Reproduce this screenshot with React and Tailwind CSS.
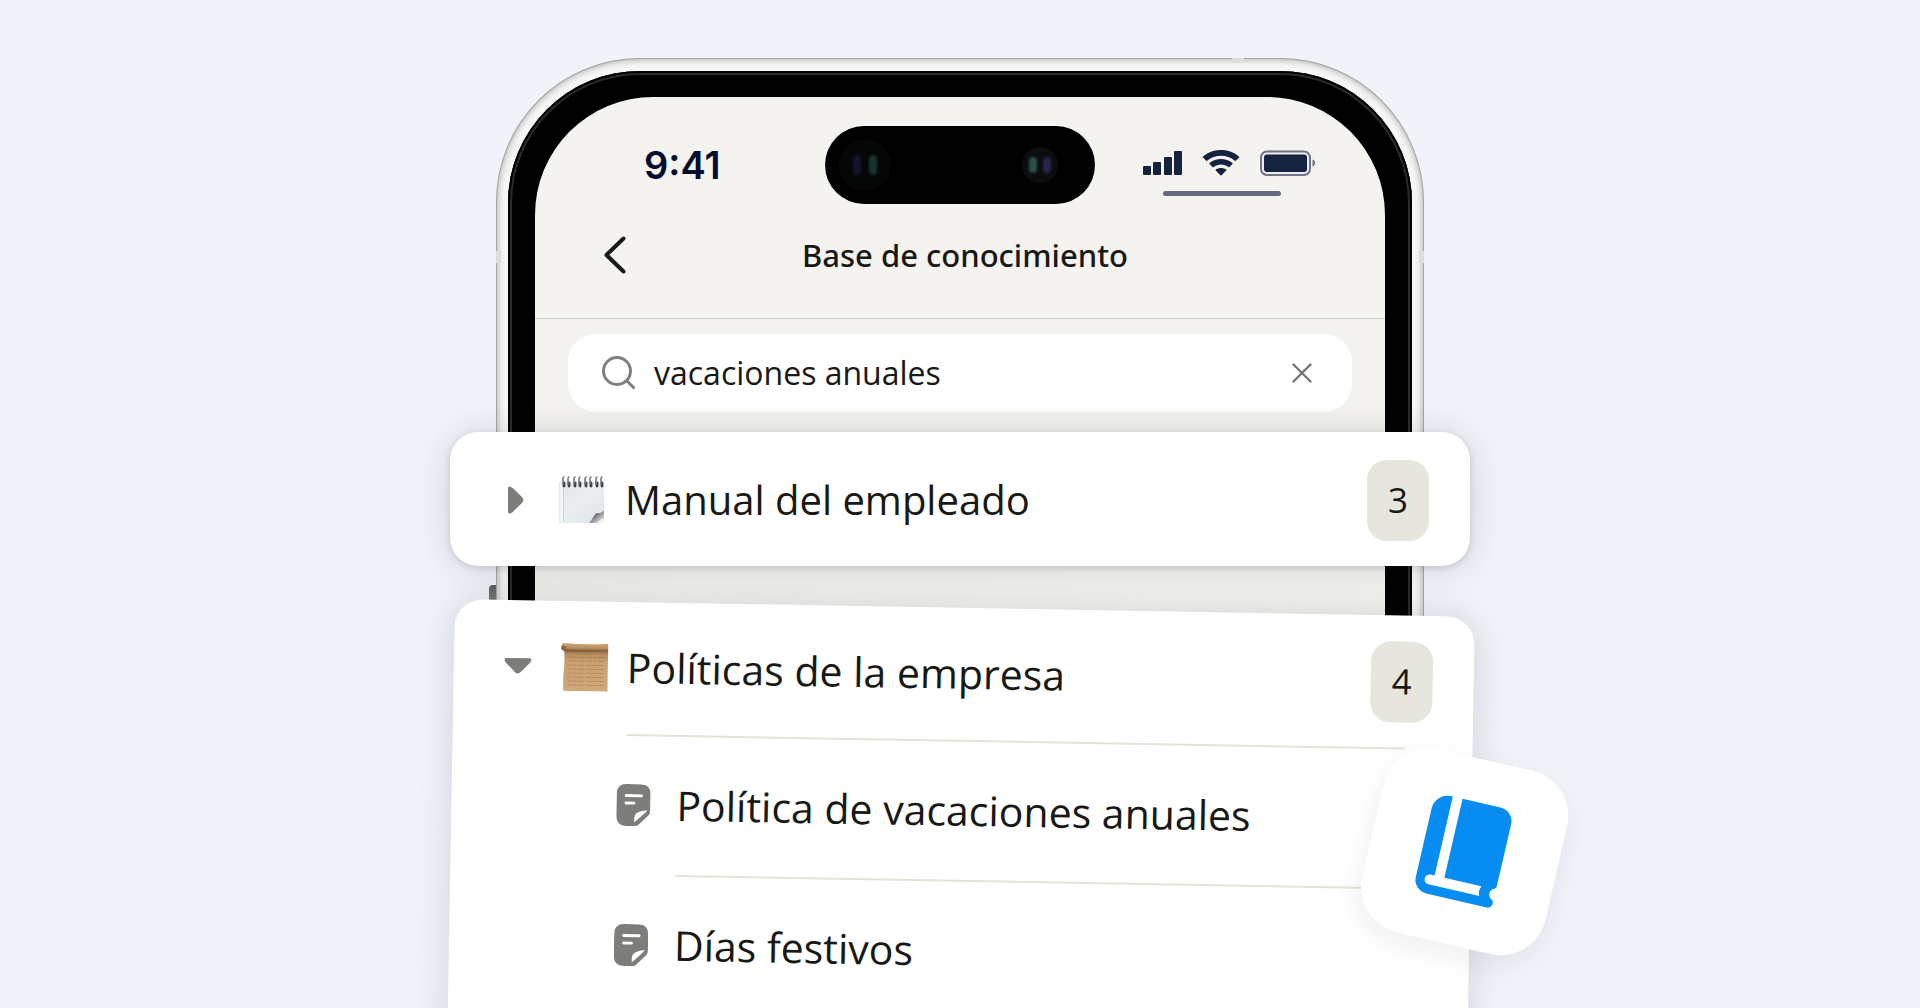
const folders = [
  { title: "Manual del empleado", count: 3 },
  {
    title: "Políticas de la empresa",
    count: 4,
    pages: ["Política de vacaciones anuales", "Días festivos"],
  },
];

const SignalIcon = () => (
  <svg width="39" height="26" viewBox="0 0 39 26" fill="#15233f">
    <rect x="0" y="16" width="8" height="9" rx="1" />
    <rect x="10" y="12" width="8" height="13" rx="1" />
    <rect x="21" y="7" width="8" height="18" rx="1" />
    <rect x="31" y="1" width="8" height="24" rx="1" />
  </svg>
);

const WifiIcon = () => (
  <svg width="38" height="26" viewBox="0 0 38 26" fill="#15233f">
    <path d="M1 7.5Q0.5 7 1 6.5C11-2.2 27-2.2 37 6.5Q37.5 7 37 7.5L34 10.6Q33.4 11.2 32.8 10.7C25 4 13 4 5.2 10.7Q4.6 11.2 4 10.6Z" />
    <path d="M7.5 14Q7 13.5 7.5 13C14 7.5 24 7.5 30.5 13Q31 13.5 30.5 14L27.5 17Q27 17.5 26.4 17C22 13.5 16 13.5 11.6 17Q11 17.5 10.5 17Z" />
    <path d="M13.8 20.5Q13.3 20 13.8 19.6C17 17.6 21 17.6 24.2 19.6Q24.7 20 24.2 20.5L19.6 25.2Q19 25.8 18.4 25.2Z" />
  </svg>
);

const BatteryIcon = () => (
  <svg width="56" height="26" viewBox="0 0 56 26">
    <rect x="1" y="1.5" width="49" height="23.5" rx="6" fill="#eceef3" stroke="#6e7284" strokeWidth="2" />
    <rect x="4" y="4.5" width="43" height="17.5" rx="3" fill="#15233f" />
    <path d="M52.5 9.5C56 10.5 56 15.5 52.5 16.5Z" fill="#6e7284" />
  </svg>
);

const ChevronIcon = () => (
  <svg width="22" height="38" viewBox="0 0 22 38" fill="none" stroke="#1b1a17" strokeWidth="4" strokeLinecap="round" strokeLinejoin="round">
    <path d="M19.5 2.5L2.5 19L19.5 35.5" />
  </svg>
);

const SearchIcon = () => (
  <svg width="34" height="34" viewBox="0 0 34 34" fill="none" stroke="#7f7f7c" strokeWidth="3">
    <circle cx="15" cy="15" r="13.5" />
    <path d="M24.5 24.5L32.5 32.5" />
  </svg>
);

const ClearIcon = () => (
  <svg width="20" height="20" viewBox="0 0 20 20" fill="none" stroke="#767673" strokeWidth="2.4" strokeLinecap="round">
    <path d="M1.5 1.5L18.5 18.5M18.5 1.5L1.5 18.5" />
  </svg>
);

const Caret = ({ open }) => (
  <svg width="28" height="28" viewBox="0 0 28 28" fill="#7d7d7a" className={open ? "rotate-90" : ""}>
    <path d="M6 2.5Q6 0 8.5 0.8Q10 1.3 11 2.3L20.2 11.3Q22.6 14 20.2 16.7L11 25.7Q10 26.7 8.5 27.2Q6 28 6 25.5Z" />
  </svg>
);

const NotepadIcon = () => (
  <svg width="46" height="48" viewBox="0 0 46 48">
    <defs>
      <linearGradient id="pad" x1="0" y1="0" x2="1" y2="1">
        <stop offset="0" stopColor="#e3e7ea" />
        <stop offset="0.5" stopColor="#e9eef1" />
        <stop offset="1" stopColor="#dfe3e8" />
      </linearGradient>
      <linearGradient id="curl" x1="0" y1="0" x2="1" y2="1">
        <stop offset="0.3" stopColor="#55565c" />
        <stop offset="0.6" stopColor="#a4a5ab" />
        <stop offset="0.9" stopColor="#e6e7ec" />
      </linearGradient>
    </defs>
    <rect x="0" y="6" width="45" height="41" fill="url(#pad)" />
    <path d="M2.5 7V46" stroke="#f7f9fa" strokeWidth="2" />
    <path d="M4.5 10V46" stroke="#ccd1d4" strokeWidth="1" />
    {[4, 9, 15, 20, 26, 31, 37, 42].map((x) => (
      <g key={x} fill="none" strokeLinecap="round">
        <path d={`M${x + 1} 10V7`} stroke="#3f4143" strokeWidth="2.8" />
        <path d={`M${x} 8V3Q${x} 1 ${x + 1} 1`} stroke="#77797c" strokeWidth="1.6" />
      </g>
    ))}
    <path d="M30 47C34 43 35 38 38 37C41 38 43 36 45 34.5V47Z" fill="url(#curl)" />
    <path d="M38 47C40 45 42 43 45 42V47Z" fill="#f3f4f6" />
  </svg>
);

const ScrollIcon = () => (
  <svg width="48" height="48" viewBox="0 0 48 48">
    <defs>
      <linearGradient id="paper" x1="0" y1="0" x2="0" y2="1">
        <stop offset="0" stopColor="#7d5d3b" />
        <stop offset="0.12" stopColor="#b68b5c" />
        <stop offset="0.3" stopColor="#c9a071" />
        <stop offset="1" stopColor="#cfa97c" />
      </linearGradient>
      <linearGradient id="roll" x1="0" y1="0" x2="0" y2="1">
        <stop offset="0" stopColor="#d3a877" />
        <stop offset="0.6" stopColor="#b88c5c" />
        <stop offset="1" stopColor="#6b4e32" />
      </linearGradient>
    </defs>
    <path d="M3 6H47V48H3Q2 40 3 28Q4 16 3 6Z" fill="url(#paper)" />
    <path d="M7 14H43M7 18H44M6 22H43M7 26H44M7 30H42M6 34H43M7 38H43M7 42H42" stroke="#9c7447" strokeWidth="1" strokeDasharray="5 1 3 1 7 2" opacity="0.45" />
    <path d="M3 0Q25 2 47 0V7Q25 9 4 8Q0 8 0 4.5Q0 0 3 0Z" fill="url(#roll)" />
    <circle cx="2.5" cy="5" r="2.5" fill="#8a6642" />
  </svg>
);

const PageIcon = () => (
  <svg width="34" height="42" viewBox="0 0 34 42">
    <path d="M10 0H24Q34 0 34 10V27Q34 29 32.5 30.5L23 40Q21 42 18.5 42H10Q0 42 0 32V10Q0 0 10 0Z" fill="#7d7d7a" />
    <path d="M9.5 11.5H25M9.5 19H17.5" stroke="#fff" strokeWidth="2.8" strokeLinecap="round" />
    <path d="M18 38Q17 29 23 27.5Q27 26 31 26Q28.5 29 25.5 31.5Q22 35 18 38Z" fill="#fff" />
  </svg>
);

const BookIcon = () => (
  <svg width="100" height="110" viewBox="-50 -55 100 110" fill="#078cf2">
    <path d="M-14 -51H25A14 14 0 0 1 39 -37V26A4 4 0 0 1 36 30C32.5 32 32.5 38 36 40A5 5 0 0 1 34 49.5H-28A14 14 0 0 1 -42 35.5V-35A16 16 0 0 1 -26 -51H-24V30H-28A5 5 0 0 0 -28 40H24C22.5 37 22.5 33 24 30H-14Z" />
  </svg>
);

const StatusBar = () => (
  <div className="grid grid-cols-[1fr_270px_1fr] items-start pt-[29px]">
    <div className="flex h-[78px] items-center pl-[109px] font-['Inter',sans-serif] text-[38px] font-semibold text-[#050d2e]">
      9:41
    </div>
    <div className="flex h-[78px] items-center justify-between rounded-full bg-black pr-[37px] pl-[14px]">
      <span className="flex size-[52px] items-center justify-center gap-2 rounded-full bg-[#050606]">
        <span className="h-5 w-2 rounded-full bg-[#10152e] blur-[1px]" />
        <span className="h-5 w-2 rounded-full bg-[#14332f] blur-[1px]" />
      </span>
      <span className="flex size-9 items-center justify-center gap-1.5 rounded-full bg-[#0b0d0e]">
        <span className="h-4 w-2 rounded-full bg-[#28514b] blur-[1px]" />
        <span className="h-4 w-2 rounded-full bg-[#25264f] blur-[1px]" />
      </span>
    </div>
    <div className="pt-6 pl-12">
      <div className="flex items-center gap-5">
        <SignalIcon />
        <WifiIcon />
        <BatteryIcon />
      </div>
      <div className="mt-[15px] ml-5 h-[5px] w-[118px] rounded-full bg-[#666b80]" />
    </div>
  </div>
);

const Phone = () => (
  <div className="relative mt-[58px] w-[928px] rounded-t-[144px] bg-[#f6f6f5] px-3 pt-[13px] shadow-[inset_0_0_0_1px_#a8a8a8,inset_0_0_6px_2px_#b3b3b3]">
    <span className="absolute top-[527px] -left-[7px] h-16 w-[7px] rounded-l-sm bg-linear-to-b from-[#5c605f] to-[#d5d6d6]" />
    <span className="absolute top-0 right-[180px] h-[5px] w-3 bg-[#dcdddd]" />
    <span className="absolute top-[193px] left-0 h-3 w-[5px] bg-[#dcdddd]" />
    <span className="absolute top-[193px] right-0 h-3 w-[5px] bg-[#dcdddd]" />
    <div className="h-full rounded-t-[132px] bg-black px-[27px] pt-[26px] shadow-[inset_0_0_0_2px_#000,inset_0_0_0_4px_#2b2b2b]">
      <div className="h-full rounded-t-[118px] bg-[#f4f3ef]">
        <StatusBar />
        <header className="flex h-[115px] items-center border-b border-[#cfcfcc] pr-[81px] pb-3 pl-[69px]">
          <button aria-label="Atrás">
            <ChevronIcon />
          </button>
          <h1 className="flex-1 text-center font-['Noto_Sans',sans-serif] text-[31px] font-medium">
            Base de conocimiento
          </h1>
        </header>
        <label className="mx-[33px] mt-[15px] flex h-[78px] items-center rounded-[28px] bg-white pr-10 pl-[34px]">
          <SearchIcon />
          <input
            type="text"
            defaultValue="vacaciones anuales"
            aria-label="Buscar"
            className="ml-[18px] min-w-0 flex-1 bg-transparent text-[32px] outline-none"
          />
          <button aria-label="Borrar">
            <ClearIcon />
          </button>
        </label>
      </div>
    </div>
  </div>
);

const FolderRow = ({ title, count, open, icon }) => (
  <div className={open ? "flex h-[132px] items-center pr-[41px] pl-[50px] text-[41px]" : "flex h-[134px] items-center pt-0.5 pr-[41px] pl-[52px] text-[40px]"}>
    <button aria-label={title} aria-expanded={open}>
      <Caret open={open} />
    </button>
    <span className="mr-5 ml-[29px] w-[46px]">{icon}</span>
    <h2 className="flex-1">{title}</h2>
    <span className="flex h-[81px] w-[62px] items-center justify-center rounded-[20px] bg-[#e6e6de] text-[35px]">
      {count}
    </span>
  </div>
);

const Cards = () => (
  <div className="z-10 w-[1020px] pt-[432px]">
    <section className="rounded-[28px] bg-white shadow-[0_2px_6px_rgba(30,35,45,0.14),0_2px_36px_rgba(30,35,45,0.16)]">
      <FolderRow {...folders[0]} open={false} icon={<NotepadIcon />} />
    </section>
    <section className="relative mt-[33px] ml-[5px] w-full origin-top-left rotate-1 rounded-t-[28px] bg-white shadow-[0_0_36px_rgba(30,35,45,0.16)]">
      <FolderRow {...folders[1]} open icon={<ScrollIcon />} />
      <ul className="pb-24">
        {folders[1].pages.map((page, i) => (
          <li key={page}>
            <hr className={i === 0 ? "mr-[68px] ml-[174px] border-t-2 border-[#e3e3d8]" : "mr-[68px] ml-[225px] border-t-2 border-[#e3e3d8]"} />
            <a href="#" className="flex h-[138px] items-center gap-[26px] pl-[165px] text-[41px]">
              <PageIcon />
              {page}
            </a>
          </li>
        ))}
      </ul>
      <div className="absolute top-[141px] right-[-88px] flex size-[188px] rotate-12 items-center justify-center rounded-[46px] bg-white shadow-[0_10px_30px_rgba(30,35,45,0.07)]">
        <BookIcon />
      </div>
    </section>
  </div>
);

const App = () => (
  <main className="grid h-screen justify-items-center overflow-hidden bg-[#f0f4f9] font-['Open_Sans',sans-serif] text-[#181815] *:col-start-1 *:row-start-1">
    <Phone />
    <Cards />
  </main>
);

export default App;
